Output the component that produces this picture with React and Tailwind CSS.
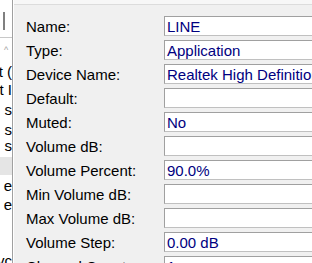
import React from 'react';

const rows = [
    ['Name:', 'LINE'],
    ['Type:', 'Application'],
    ['Device Name:', 'Realtek High Definition Audio'],
    ['Default:', ''],
    ['Muted:', 'No'],
    ['Volume dB:', ''],
    ['Volume Percent:', '90.0%'],
    ['Min Volume dB:', ''],
    ['Max Volume dB:', ''],
    ['Volume Step:', '0.00 dB'],
    ['Channel Count:', '1'],
];

const App = () => {
    return (
        <div
            className="flex w-[312px] h-[263px] overflow-hidden bg-[#f0f0f0] text-[15px] leading-none"
            style={{ fontFamily: '"Liberation Sans", Arial, sans-serif' }}
        >
            {/* Left list panel (partially visible) */}
            <div className="w-[13px] shrink-0 bg-white border-r border-[#a0a0a0] flex flex-col overflow-hidden text-black">
                <div className="h-[38px] shrink-0 border-b border-[#c8c8c8] flex pl-[3px] pt-[12px]">
                    <div className="w-[2px] h-[18px] bg-[#808080]" />
                </div>
                <div className="h-[24px] shrink-0 flex items-center justify-center text-[9px] text-[#a0a0a0]">^</div>
                <div className="h-[18px] shrink-0 flex items-center justify-end whitespace-nowrap">t (</div>
                <div className="h-[18px] shrink-0 flex items-center justify-end whitespace-nowrap">t I</div>
                <div className="h-[22px] shrink-0 flex items-center justify-end">s</div>
                <div className="h-[18px] shrink-0 flex items-center justify-end">s</div>
                <div className="h-[14px] shrink-0 flex items-center justify-end">s</div>
                <div className="h-[5px] shrink-0" />
                <div className="h-[18px] shrink-0 bg-[#e5e5e5]" />
                <div className="h-[20px] shrink-0 flex items-center justify-end">e</div>
                <div className="h-[18px] shrink-0 flex items-center justify-end">e</div>
                <div className="h-[38px] shrink-0" />
                <div className="h-[18px] shrink-0 flex items-center justify-end whitespace-nowrap">vc</div>
            </div>

            {/* Properties panel */}
            <div className="flex-1 flex flex-col border-l border-white">
                <div className="h-[5px] bg-[#f7f7f7] border-b border-[#dcdcdc] shrink-0" />
                <div className="flex flex-col pt-[9px] pl-[12px]">
                    {rows.map(([label, value]) => (
                        <div key={label} className="h-[24px] flex items-center shrink-0">
                            <div className="w-[138px] shrink-0 text-black whitespace-nowrap">{label}</div>
                            <div className="h-[20px] w-[200px] shrink-0 bg-white border border-[#a0a0a0] border-b-[#c0c0c0] flex items-center pl-[2px] text-[#000080] whitespace-nowrap overflow-hidden">
                                {value}
                            </div>
                        </div>
                    ))}
                </div>
            </div>
        </div>
    );
};

export default App;
